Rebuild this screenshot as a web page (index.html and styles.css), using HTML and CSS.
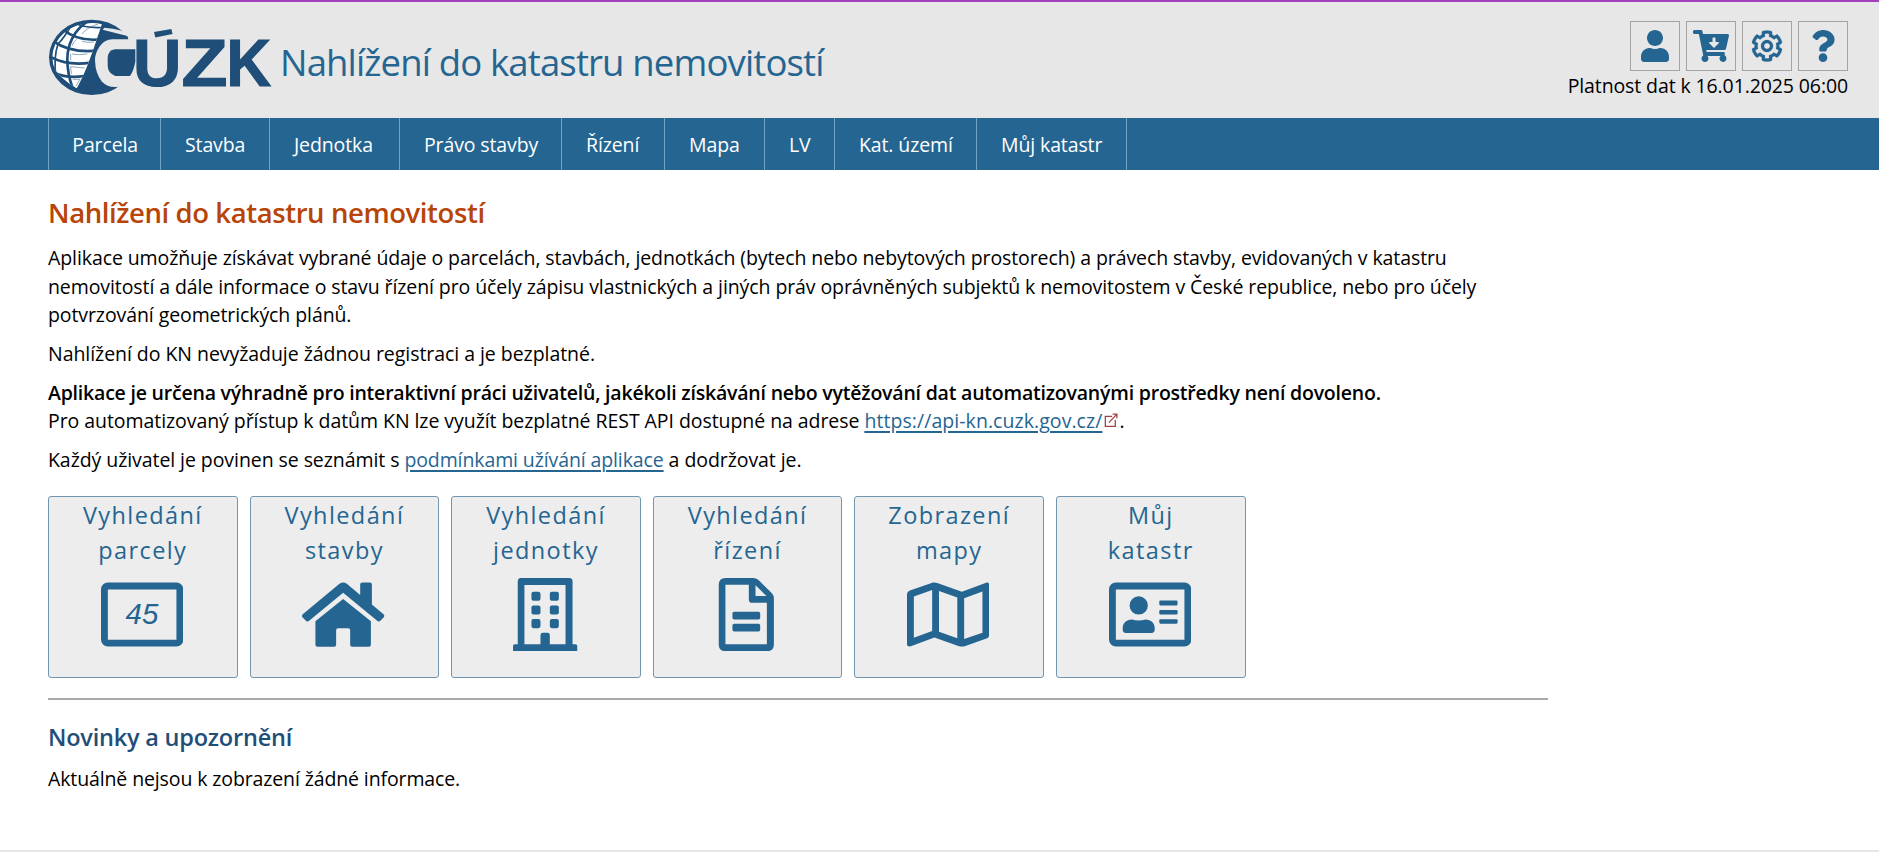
FILE: index.html
```
<!DOCTYPE html>
<html lang="cs">
<head>
<meta charset="utf-8">
<title>Nahlížení do katastru nemovitostí</title>
<link rel="stylesheet" href="styles.css">
</head>
<body>
<header class="header">
  <a class="logo" aria-label="ČÚZK">
    <svg width="230" height="86" viewBox="0 0 230 86">
      <defs>
        <clipPath id="globe"><path d="M176 23C160 70 130 170 98 223C60 200 22 170 22 130C22 80 75 18 176 23Z"/></clipPath>
      </defs>
      <g transform="scale(.33333)">
        <ellipse class="ink" cx="143" cy="130" rx="128" ry="113"/>
        <g clip-path="url(#globe)">
          <ellipse cx="143" cy="130" rx="118" ry="103" fill="#fff"/>
          <g class="grid">
            <path d="M134 20C88 48 70 95 70 135Q70 180 86 222"/>
            <path d="M88 24Q62 70 42 90Q28 130 36 190" stroke-width="5"/>
            <path d="M56 45Q100 84 172 76"/>
            <path d="M28 82Q80 118 160 110" />
            <path d="M18 128Q70 156 140 146"/>
            <path d="M30 176Q70 194 120 186"/>
            <path d="M95 28Q125 44 185 40" stroke-width="5"/>
          </g>
          <g class="thin">
            <path d="M114 60Q126 42 162 30M84 96Q88 82 98 76M80 138V120M82 180L80 158L122 162M86 196H108L96 216M114 82Q130 87 150 84M84 120Q104 124 130 120"/>
          </g>
        </g>
        <path class="paper" d="M234 50Q206 43 181 41L176 47L250 66L252 75H205Q180 78 168 96Q153 117 153 138Q154 180 174 203Q192 222 224 218L290 240V20H234Z"/>
        <path class="ink" d="M178 68Q212 62 250 66L253 76H190Z"/>
        <path class="ink" d="M212 106H274V143Q269 170 258 186H214Q191 178 191 154V132Q192 110 212 106Z"/>
      </g>
      <path class="ink" d="M110 18.100L127.300 15L128.600 20.100L111.300 23.500Z"/>
      <g class="wordmark"><text x="89" y="71.600">U</text><text x="137.500" y="71.600" textLength="46" lengthAdjust="spacingAndGlyphs">Z</text><text x="182.500" y="71.600" textLength="44.500" lengthAdjust="spacingAndGlyphs">K</text></g>
    </svg>
  </a>
  <div class="app-title">Nahlížení do katastru nemovitostí</div>
  <div class="tools">
    <div class="tool-row">
      <a class="tool"><svg width="28" height="32" viewBox="0 0 448 512"><path d="M224 256c70.700 0 128-57.300 128-128S294.700 0 224 0 96 57.300 96 128s57.300 128 128 128zm89.600 32h-16.700c-22.200 10.200-46.900 16-72.900 16s-50.600-5.800-72.900-16h-16.700C60.200 288 0 348.200 0 422.400V464c0 26.500 21.500 48 48 48h352c26.500 0 48-21.500 48-48v-41.600c0-74.200-60.200-134.400-134.400-134.400z"/></svg></a>
      <a class="tool"><svg width="36" height="32" viewBox="0 0 576 512"><path d="M504.717 320H211.572l6.545 32h268.418c15.401 0 26.816 14.301 23.403 29.319l-5.517 24.276C523.112 414.668 536 433.828 536 456c0 31.202-25.519 56.444-56.824 55.994-29.823-.429-54.350-24.631-55.155-54.447-.44-16.287 6.085-31.049 16.803-41.548H231.176C241.553 426.165 248 440.326 248 456c0 31.813-26.528 57.431-58.670 55.938-28.540-1.325-51.751-24.385-53.251-52.917-1.158-22.034 10.436-41.455 28.051-51.586L93.883 64H24C10.745 64 0 53.255 0 40V24C0 10.745 10.745 0 24 0h102.529c11.401 0 21.228 8.021 23.513 19.190L159.208 64H551.990c15.401 0 26.816 14.301 23.403 29.319l-47.273 208C525.637 312.246 515.923 320 504.717 320zM403.029 192H360v-60c0-6.627-5.373-12-12-12h-24c-6.627 0-12 5.373-12 12v60h-43.029c-10.691 0-16.045 12.926-8.485 20.485l67.029 67.029c4.686 4.686 12.284 4.686 16.971 0l67.029-67.029c7.559-7.559 2.205-20.485-8.486-20.485z"/></svg></a>
      <a class="tool"><svg class="cog" width="32" height="32" viewBox="0 0 512 512"><path d="M452.515 237l31.843-18.382c9.426-5.441 13.996-16.542 11.177-27.054-11.404-42.531-33.842-80.547-64.058-110.797-7.680-7.688-19.575-9.246-28.985-3.811l-31.785 18.358a196.276 196.276 0 0 0-32.899-19.020V39.541a24.016 24.016 0 0 0-17.842-23.206c-41.761-11.107-86.117-11.121-127.930-.001-10.519 2.798-17.844 12.321-17.844 23.206v36.753a196.276 196.276 0 0 0-32.899 19.020l-31.785-18.358c-9.410-5.435-21.305-3.877-28.985 3.811-30.216 30.250-52.654 68.265-64.058 110.797-2.819 10.512 1.751 21.613 11.177 27.054L59.485 237a197.715 197.715 0 0 0 0 37.999l-31.843 18.382c-9.426 5.441-13.996 16.542-11.177 27.054 11.404 42.531 33.842 80.547 64.058 110.797 7.680 7.688 19.575 9.246 28.985 3.811l31.785-18.358a196.202 196.202 0 0 0 32.899 19.019v36.753a24.016 24.016 0 0 0 17.842 23.206c41.761 11.107 86.117 11.122 127.930.001 10.519-2.798 17.844-12.321 17.844-23.206v-36.753a196.340 196.340 0 0 0 32.899-19.019l31.785 18.358c9.410 5.435 21.305 3.877 28.985-3.811 30.216-30.250 52.654-68.266 64.058-110.797 2.819-10.512-1.751-21.613-11.177-27.054L452.515 275c1.220-12.650 1.220-25.350 0-38zm-52.679 63.019l43.819 25.289a200.138 200.138 0 0 1-33.849 58.528l-43.829-25.309c-31.984 27.397-36.659 30.077-76.168 44.029v50.599a200.917 200.917 0 0 1-67.618 0v-50.599c-39.504-13.950-44.196-16.642-76.168-44.029l-43.829 25.309a200.150 200.150 0 0 1-33.849-58.528l43.819-25.289c-7.630-41.299-7.634-46.719 0-88.038l-43.819-25.289c7.850-21.229 19.310-41.049 33.849-58.529l43.829 25.309c31.984-27.397 36.660-30.078 76.168-44.029V58.845a200.917 200.917 0 0 1 67.618 0v50.599c39.504 13.950 44.196 16.642 76.168 44.029l43.829-25.309a200.143 200.143 0 0 1 33.849 58.529l-43.819 25.289c7.631 41.300 7.634 46.718 0 88.037zM256 160c-52.935 0-96 43.065-96 96s43.065 96 96 96 96-43.065 96-96-43.065-96-96-96zm0 144c-26.468 0-48-21.532-48-48 0-26.467 21.532-48 48-48s48 21.533 48 48c0 26.468-21.532 48-48 48z"/></svg></a>
      <a class="tool"><svg width="24" height="32" viewBox="0 0 384 512"><path d="M202.021 0C122.202 0 70.503 32.703 29.914 91.026c-7.363 10.580-5.093 25.086 5.178 32.874l43.138 32.709c10.373 7.865 25.132 6.026 33.253-4.148 25.049-31.381 43.630-49.449 82.757-49.449 30.764 0 68.816 19.799 68.816 49.631 0 22.552-18.617 34.134-48.993 51.164-35.423 19.860-82.299 44.576-82.299 106.405V320c0 13.255 10.745 24 24 24h72.471c13.255 0 24-10.745 24-24v-5.773c0-42.860 125.268-44.645 125.268-160.627C377.504 66.256 286.902 0 202.021 0zM192 373.459c-38.196 0-69.271 31.075-69.271 69.271 0 38.195 31.075 69.270 69.271 69.270s69.271-31.075 69.271-69.271-31.075-69.270-69.271-69.270z"/></svg></a>
    </div>
    <div class="validity">Platnost dat k 16.01.2025 06:00</div>
  </div>
</header>

<nav class="nav">
  <a class="n-parcela">Parcela</a><a class="n-stavba">Stavba</a><a class="n-jednotka">Jednotka</a><a class="n-pravo">Právo stavby</a><a class="n-rizeni">Řízení</a><a class="n-mapa">Mapa</a><a class="n-lv">LV</a><a class="n-uzemi">Kat. území</a><a class="n-muj">Můj katastr</a>
</nav>

<main class="main">
  <h1>Nahlížení do katastru nemovitostí</h1>
  <p>Aplikace umožňuje získávat vybrané údaje o parcelách, stavbách, jednotkách (bytech nebo nebytových prostorech) a právech stavby, evidovaných v katastru<br>nemovitostí a dále informace o stavu řízení pro účely zápisu vlastnických a jiných práv oprávněných subjektů k nemovitostem v České republice, nebo pro účely<br>potvrzování geometrických plánů.</p>
  <p class="free">Nahlížení do KN nevyžaduje žádnou registraci a je bezplatné.</p>
  <p class="api"><strong>Aplikace je určena výhradně pro interaktivní práci uživatelů, jakékoli získávání nebo vytěžování dat automatizovanými prostředky není dovoleno.</strong><br>Pro automatizovaný přístup k datům KN lze využít bezplatné REST API dostupné na adrese <a class="url">https://api-kn.cuzk.gov.cz/</a><svg class="ext" width="14" height="15" viewBox="0 0 13 14"><path d="M7.500 3.200H1.200V12.500H10.500V6.500M4.500 9L12 1M8 1H12V5"/></svg>.</p>
  <p class="terms">Každý uživatel je povinen se seznámit s <a>podmínkami užívání aplikace</a> a dodržovat je.</p>

  <div class="tiles">
    <a class="tile"><span>Vyhledání<br>parcely</span>
      <svg viewBox="0 0 576 512"><path fill-rule="evenodd" d="M48 32H528A48 48 0 0 1 576 80V432A48 48 0 0 1 528 480H48A48 48 0 0 1 0 432V80A48 48 0 0 1 48 32ZM48 80V432H528V80Z"/><text class="number" x="172" y="325">45</text></svg></a>
    <a class="tile"><span>Vyhledání<br>stavby</span>
      <svg viewBox="0 0 246 219"><g transform="translate(0 13.500)"><path d="M112 4Q123 -4 134 4L174 37V6Q174 0 180 0H203Q209 0 209 6V66L243 94Q249 99 244 105L235 114Q230 119 224 114L123 31L22 114Q16 119 11 114L2 105Q-3 99 3 94Z"/><path d="M123 49L206 116V186Q206 192 200 192H150Q144 192 144 186V143Q144 137 138 137H108Q102 137 102 143V186Q102 192 96 192H46Q40 192 40 186V116Z"/></g></svg></a>
    <a class="tile"><span>Vyhledání<br>jednotky</span>
      <svg viewBox="0 0 246 219"><path fill-rule="evenodd" d="M41 198V10Q41 0 51 0H195Q205 0 205 10V198H214Q219 198 219 203V219H27V203Q27 198 32 198ZM61 21V198H109V171Q109 164 116 164H130Q137 164 137 171V198H184V21Z"/><rect x="82" y="41" width="27" height="27" rx="6"/><rect x="137" y="41" width="27" height="27" rx="6"/><rect x="82" y="82" width="27" height="27" rx="6"/><rect x="137" y="82" width="27" height="27" rx="6"/><rect x="82" y="123" width="27" height="27" rx="6"/><rect x="137" y="123" width="27" height="27" rx="6"/></svg></a>
    <a class="tile"><span>Vyhledání<br>řízení</span>
      <svg viewBox="0 0 246 219"><path fill-rule="evenodd" d="M61 0H144Q153 0 160 6L200 46Q206 53 206 60V198Q206 219 185 219H61Q41 219 41 198V21Q41 0 61 0ZM61 20V198H185V74H141Q131 74 131 64V20ZM151 22V54H184Z"/><rect x="82" y="101" width="83" height="23" rx="5"/><rect x="82" y="137" width="83" height="23" rx="5"/></svg></a>
    <a class="tile"><span>Zobrazení<br>mapy</span>
      <svg viewBox="0 0 576 512"><path d="M560.020 32c-1.960 0-3.980.370-5.960 1.160L384.010 96H384L212 35.280A64.252 64.252 0 0 0 191.760 32c-6.690 0-13.370 1.050-19.810 3.140L20.120 87.950A32.006 32.006 0 0 0 0 117.660v346.320C0 473.170 7.530 480 15.990 480c1.960 0 3.970-.370 5.960-1.160L192 416l172 60.710a63.980 63.980 0 0 0 40.050.150l151.830-52.810A31.996 31.996 0 0 0 576 394.340V48.020c0-9.190-7.530-16.020-15.980-16.020zM224 90.420l128 45.190v285.970l-128-45.190V90.420zM48 418.050V129.070l128-44.530v286.200l-.640.230L48 418.050zm480-35.130l-128 44.530V141.260l.640-.240L528 93.950v288.970z"/></svg></a>
    <a class="tile"><span>Můj<br>katastr</span>
      <svg viewBox="0 0 576 512"><path fill-rule="evenodd" d="M48 32H528A48 48 0 0 1 576 80V432A48 48 0 0 1 528 480H48A48 48 0 0 1 0 432V80A48 48 0 0 1 48 32ZM48 80V432H528V80Z"/><circle cx="208" cy="192" r="64"/><path d="M160 290Q208 304 256 290C295 290 320 318 320 350V362Q320 384 298 384H118Q96 384 96 362V350C96 318 121 290 160 290Z"/><rect x="352" y="158" width="128" height="34" rx="8"/><rect x="352" y="224" width="128" height="32" rx="8"/><rect x="352" y="288" width="128" height="32" rx="8"/></svg></a>
  </div>

  <hr>
  <h2>Novinky a upozornění</h2>
  <p class="news">Aktuálně nejsou k zobrazení žádné informace.</p>
</main>
<footer class="footer"></footer>
</body>
</html>
```
FILE: styles.css
```
* { box-sizing: border-box; }

body {
  margin: 0;
  height: 852px;
  overflow: hidden;
  display: flex;
  flex-direction: column;
  background: #fff;
  color: #000;
  font: 19.5px/28.5px "Open Sans", "Noto Sans", sans-serif;
}

.header {
  flex: none;
  display: flex;
  height: 118px;
  padding: 12px 31px 0 44px;
  border-top: 2px solid #a33ebd;
  background: #e7e7e7;
}

.logo { flex: none; width: 236px; height: 86px; }
.logo svg { display: block; }
.ink { fill: #1f4e79; }
.paper { fill: #e7e7e7; }
.grid { fill: none; stroke: #1f4e79; stroke-width: 8; }
.thin { fill: none; stroke: #1f4e79; stroke-width: 1.5; }
.wordmark {
  fill: #1f4e79;
  stroke: #1f4e79;
  stroke-width: 1.2;
  font: 700 67px "Liberation Sans", sans-serif;
}

.app-title {
  margin-top: 23px;
  color: #256591;
  font-size: 36.500px;
  line-height: 50px;
  letter-spacing: -0.850px;
  white-space: nowrap;
}

.tools { margin-left: auto; padding-top: 7px; }
.tool-row { display: flex; justify-content: flex-end; gap: 6px; }
.tool {
  display: flex;
  align-items: center;
  justify-content: center;
  width: 50px;
  height: 50px;
  border: 1px solid #a3a3a3;
}
.tool svg { fill: #256591; }
.cog { stroke: #256591; stroke-width: 4; }
.validity {
  margin-top: 1px;
  text-align: right;
  letter-spacing: -0.110px;
  white-space: nowrap;
}

.nav {
  flex: none;
  display: flex;
  height: 52px;
  padding-left: 48px;
  background: #256591;
}
.nav a {
  padding-left: 24px;
  border-left: 1px solid #6fa3c4;
  color: #fff;
  line-height: 54px;
  letter-spacing: -0.120px;
  white-space: nowrap;
}
.nav .n-parcela { width: 112px; padding-left: 23.300px; }
.n-stavba { width: 109px; }
.n-jednotka { width: 130px; }
.n-pravo { width: 162px; }
.n-rizeni { width: 103px; }
.n-mapa { width: 100px; }
.n-lv { width: 70px; }
.n-uzemi { width: 142px; }
.nav .n-muj { width: 151px; border-right: 1px solid #6fa3c4; }

.main { flex: none; width: 1548px; height: 680px; padding: 23px 0 0 48px; }

h1 {
  margin: 0 0 11px;
  color: #b84508;
  font-size: 27.500px;
  font-weight: 600;
  line-height: 40px;
  letter-spacing: -0.410px;
}
p { margin: 0 0 10.300px; letter-spacing: -0.090px; white-space: nowrap; }
.free { letter-spacing: -0.050px; }
.api { letter-spacing: -0.060px; }
.terms { letter-spacing: -0.070px; }
strong { font-weight: 600; letter-spacing: -0.210px; }
p a { color: #256591; text-decoration: underline; text-decoration-thickness: 2px; text-underline-offset: 3px; }
.terms a { letter-spacing: -0.110px; }
.url { letter-spacing: 0.060px; }
.ext {
  margin: 0 1px 0 2px;
  fill: none;
  stroke: #a84040;
  stroke-width: 1.200;
}

.tiles { display: flex; gap: 12px; margin-top: 22px; }
.tile {
  display: flex;
  flex-direction: column;
  align-items: center;
  width: 189.600px;
  height: 182px;
  padding-top: 1px;
  border: 1px solid #7396b0;
  border-radius: 3px;
  background: #ededed;
  color: #256591;
  text-align: center;
}
.tile span {
  font-size: 23.500px;
  line-height: 34.300px;
  letter-spacing: 1.400px;
}
.tile svg { width: 82.300px; height: 73.200px; margin: 11px 2px 0 0; fill: #256591; }
.number { font: italic 206px "Liberation Sans", sans-serif; }

hr { height: 2px; margin: 20px 0 20px; border: 0; background: #a9a9a9; }
h2 {
  margin: 0 0 11px;
  color: #1f4e79;
  font-size: 23.500px;
  font-weight: 600;
  line-height: 34px;
  letter-spacing: -0.210px;
}
.news { letter-spacing: -0.120px; }

.footer { flex: none; height: 2px; background: #e7e7e7; }
```
